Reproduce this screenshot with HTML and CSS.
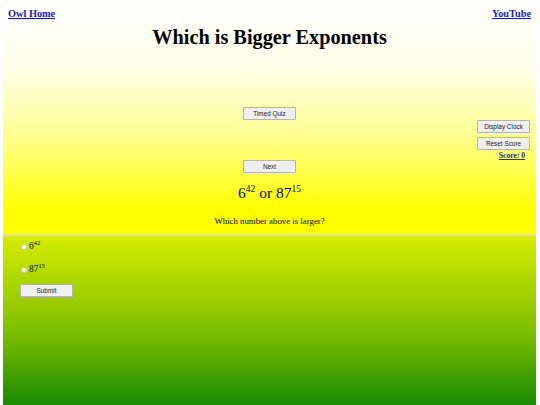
FILE: index.html
```html
<!DOCTYPE html>
<html>
<head>
<meta charset="utf-8">
<link rel="stylesheet" href="styles.css">
</head>
<body>
<div class="page">
  <section class="top">
    <nav class="nav">
      <a href="#">Owl Home</a>
      <a href="#">YouTube</a>
    </nav>
    <h1 class="title">Which is Bigger Exponents</h1>
    <div class="controls">
      <div class="side"></div>
      <div class="center">
        <button class="btn">Timed Quiz</button>
        <button class="btn next">Next</button>
      </div>
      <div class="side right">
        <button class="btn">Display Clock</button>
        <button class="btn">Reset Score</button>
        <a class="score" href="#">Score: 0</a>
      </div>
    </div>
    <div class="equation">6<sup>42</sup> or 87<sup>15</sup></div>
    <p class="question">Which number above is larger?</p>
  </section>
  <section class="bottom">
    <label class="option"><input type="radio" name="a"><span>6<sup>42</sup></span></label>
    <label class="option"><input type="radio" name="a"><span>87<sup>15</sup></span></label>
    <button class="btn submit">Submit</button>
  </section>
</div>
</body>
</html>
```

FILE: styles.css
```css
html, body {
  margin: 0;
  padding: 0;
  background: #ffffff;
  height: 100%;
}
body {
  font-family: "Liberation Serif", "Times New Roman", serif;
  color: #000;
}
.page {
  margin: 0 4px 0 3px;
  min-height: 100%;
  display: flex;
  flex-direction: column;
}
.top {
  height: 234px;
  background: linear-gradient(to bottom, #ffffff 0px, #ffffe6 70px, #ffff99 130px, #ffff30 185px, #ffff00 210px, #ffff00 234px);
  border-bottom: 2px solid #e4e2a8;
  display: flex;
  flex-direction: column;
}
.nav {
  display: flex;
  justify-content: space-between;
  padding: 7px 5px 0 5px;
  font-size: 10.3px;
  font-weight: bold;
  line-height: 13px;
}
.nav a, .score {
  color: #1a1ab8;
  text-decoration: underline;
}
.title {
  margin: 5px 0 0 0;
  text-align: center;
  font-size: 20.3px;
  line-height: 24px;
  font-weight: bold;
}
.controls {
  display: grid;
  grid-template-columns: 1fr auto 1fr;
  margin-top: 58px;
}
.center {
  display: flex;
  flex-direction: column;
  align-items: center;
}
.btn {
  width: 53px;
  height: 13px;
  padding: 0;
  font-family: "Liberation Sans", Arial, sans-serif;
  font-size: 6.4px;
  line-height: 11px;
  color: #222;
  background: #f0f0f0;
  border: 1px solid #b4b4b4;
  border-radius: 1px;
}
.next {
  margin-top: 40px;
}
.right {
  display: flex;
  flex-direction: column;
  align-items: flex-end;
  padding: 13px 6px 0 0;
}
.right .btn + .btn {
  margin-top: 4px;
}
.score {
  font-weight: bold;
  font-size: 7.6px;
  line-height: 10px;
  margin: 1px 5px 0 0;
}
.equation {
  text-align: center;
  font-size: 15.5px;
  line-height: 18px;
  margin-top: 11px;
}
.equation sup {
  font-size: 9.5px;
  vertical-align: 6px;
  line-height: 0;
}
.question {
  text-align: center;
  font-size: 8.8px;
  line-height: 11px;
  margin: 14px 0 0 0;
}
.bottom {
  flex: 1;
  background: linear-gradient(to bottom, #d6ec00 0px, #7fbf00 95px, #1a8b00 169px);
  display: flex;
  flex-direction: column;
  align-items: flex-start;
  padding: 4px 0 0 15px;
}
.option {
  display: flex;
  align-items: center;
  font-size: 9.5px;
  line-height: 12px;
  height: 12px;
}
.option + .option {
  margin-top: 11px;
}
.option input {
  appearance: none;
  -webkit-appearance: none;
  width: 6px;
  height: 6px;
  margin: 2px 2px 0 3px;
  border-radius: 50%;
  background: #ffffff;
  border: 1px solid #c8c8c8;
}
.option sup {
  font-size: 6.5px;
  vertical-align: 4px;
  line-height: 0;
}
.submit {
  margin-top: 9px;
  margin-left: 2px;
}
```
